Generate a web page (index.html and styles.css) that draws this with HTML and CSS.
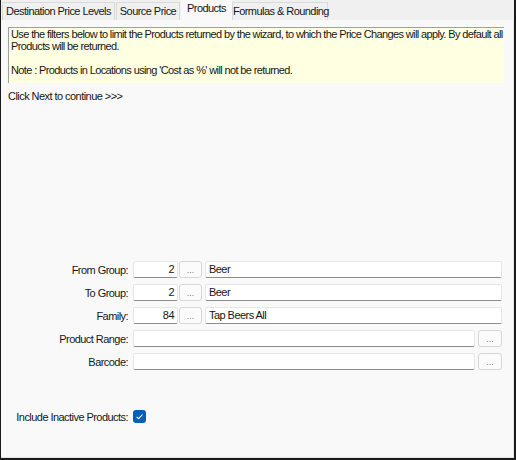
FILE: index.html
```html
<!DOCTYPE html>
<html>
<head>
<meta charset="utf-8">
<link rel="stylesheet" href="styles.css">
</head>
<body>
<div class="window">
  <div class="tabs">
    <div class="tab t1">Destination Price Levels</div>
    <div class="tab t2">Source Price</div>
    <div class="tab t3 active">Products</div>
    <div class="tab t4">Formulas &amp; Rounding</div>
  </div>
  <div class="panel">
    <div class="info">
      <div>Use the filters below to limit the Products returned by the wizard, to which the Price Changes will apply. By default all Products will be returned.</div>
      <div class="blank">&nbsp;</div>
      <div>Note : Products in Locations using 'Cost as %' will not be returned.</div>
    </div>
    <div class="hint">Click Next to continue &gt;&gt;&gt;</div>

    <div class="form">
      <div class="row">
        <div class="label">From Group:</div>
        <div class="input code">2</div>
        <div class="btn">...</div>
        <div class="input name">Beer</div>
      </div>
      <div class="row">
        <div class="label">To Group:</div>
        <div class="input code">2</div>
        <div class="btn">...</div>
        <div class="input name">Beer</div>
      </div>
      <div class="row">
        <div class="label">Family:</div>
        <div class="input code">84</div>
        <div class="btn">...</div>
        <div class="input name">Tap Beers All</div>
      </div>
      <div class="row">
        <div class="label">Product Range:</div>
        <div class="input wide"></div>
        <div class="btn btn-wide">...</div>
      </div>
      <div class="row">
        <div class="label">Barcode:</div>
        <div class="input wide"></div>
        <div class="btn btn-wide">...</div>
      </div>
      <div class="row check-row">
        <div class="label">Include Inactive Products:</div>
        <div class="checkbox">
          <svg width="13" height="13" viewBox="0 0 13 13"><path d="M3.6 6.8 L5.6 8.7 L9.5 4.5" fill="none" stroke="#ffffff" stroke-width="1.1"/></svg>
        </div>
      </div>
    </div>
  </div>
</div>
</body>
</html>
```

FILE: styles.css
```css
html, body {
  margin: 0;
  padding: 0;
}
body {
  width: 516px;
  height: 460px;
  overflow: hidden;
  font-family: "Liberation Sans", Arial, sans-serif;
  font-size: 11px;
  letter-spacing: -0.55px;
  color: #161616;
}
.window {
  box-sizing: border-box;
  width: 516px;
  height: 460px;
  border-left: 1px solid #1a1a1a;
  border-right: 2px solid #1a1a1a;
  border-bottom: 2px solid #1a1a1a;
  background: #f0f0f0;
  display: flex;
  flex-direction: column;
}
.tabs {
  height: 20px;
  display: flex;
  align-items: flex-end;
  padding-left: 1px;
  background: #f0f0f0;
  flex-shrink: 0;
}
.tab {
  box-sizing: border-box;
  height: 18px;
  border: 1px solid #dadada;
  border-bottom: none;
  margin-right: 1px;
  background: #f0f0f0;
  line-height: 17px;
  text-align: center;
  white-space: nowrap;
}
.t1 { width: 113px; }
.t2 { width: 64px; }
.t3 { width: 51px; }
.t4 { width: 96px; }
.tab.active {
  height: 20px;
  line-height: 15px;
  background: #f9f9f9;
  border-color: #f9f9f9;
  margin-right: 0;
}
.panel {
  flex: 1;
  background: #f9f9f9;
  border-right: 1px solid #e4e4e4;
  border-bottom: 1px solid #e4e4e4;
  padding: 7px 9px 0 7px;
  display: flex;
  flex-direction: column;
}
.info {
  box-sizing: border-box;
  height: 56px;
  background: #ffffe1;
  border-top: 1px solid #a0a0a0;
  border-left: 1px solid #a0a0a0;
  padding: 0 0 0 2px;
  line-height: 12px;
  letter-spacing: -0.62px;
}
.hint {
  margin-top: 7px;
  line-height: 13px;
}
.form {
  margin-top: 158px;
  padding-right: 2px;
  display: flex;
  flex-direction: column;
  gap: 6px;
}
.row {
  display: flex;
  align-items: center;
  height: 17px;
}
.label {
  width: 120px;
  text-align: right;
  margin-right: 5px;
  white-space: nowrap;
}
.input {
  box-sizing: border-box;
  height: 17px;
  background: #ffffff;
  border: 1px solid #e6e6e6;
  border-bottom: 1px solid #8c8c8c;
  border-radius: 2px;
  line-height: 15px;
  padding: 0 3px;
  white-space: nowrap;
}
.code {
  width: 45px;
  text-align: right;
}
.name {
  flex: 1;
  margin-left: 3px;
}
.wide {
  width: 342px;
}
.btn {
  box-sizing: border-box;
  width: 23px;
  height: 17px;
  margin-left: 1px;
  background: #fbfbfb;
  border: 1px solid #d6d6d6;
  border-radius: 3px;
  color: #7a7a7a;
  font-size: 9px;
  line-height: 17px;
  text-align: center;
  letter-spacing: 0;
}
.btn-wide {
  width: 24px;
  margin-left: 3px;
}
.check-row {
  margin-top: 32px;
}
.checkbox {
  width: 13px;
  height: 13px;
  background: #005fb8;
  border-radius: 3px;
  display: flex;
}
```
